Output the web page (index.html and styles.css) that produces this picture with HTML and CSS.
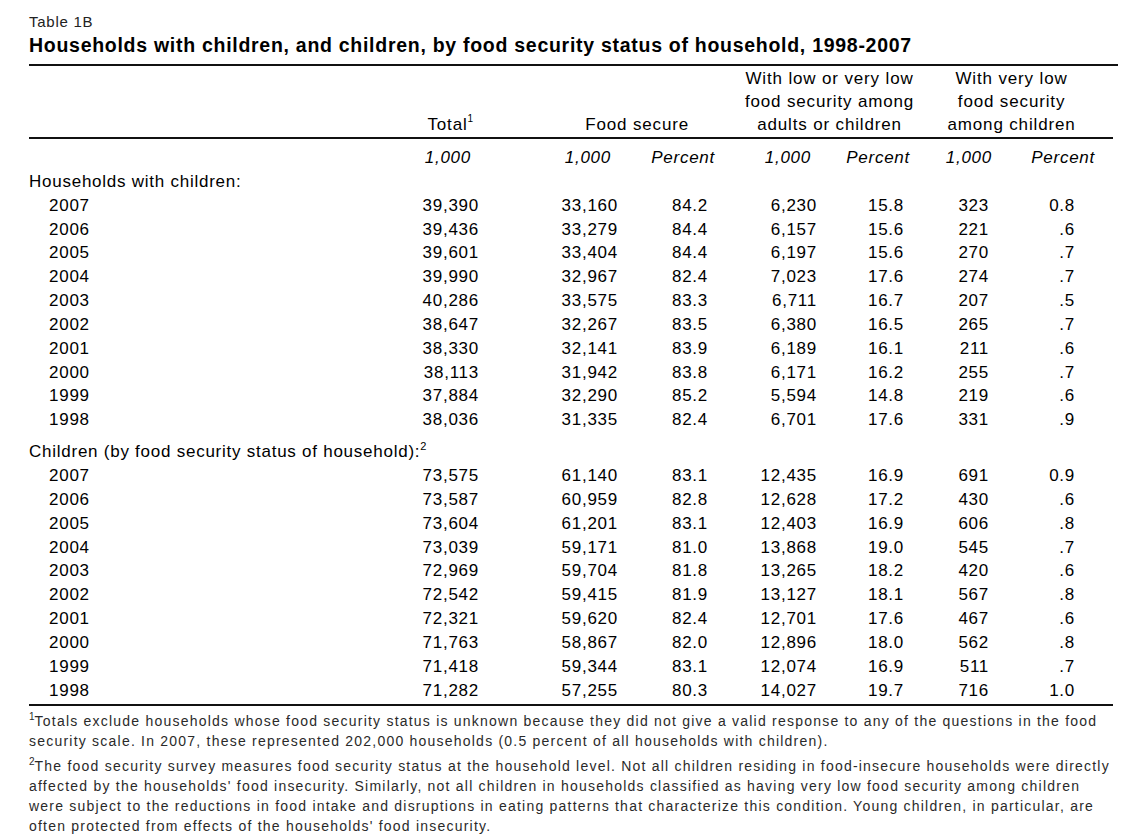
FILE: index.html
```html
<!DOCTYPE html>
<html>
<head>
<meta charset="utf-8">
<title>Table 1B</title>
<link rel="stylesheet" href="styles.css">
</head>
<body>
<div class="page">
  <div class="table-no">Table 1B</div>
  <h1 class="title">Households with children, and children, by food security status of household, 1998-2007</h1>
  <div class="top-rule"></div>
  <table class="data">
    <colgroup>
      <col class="w0"><col class="w1"><col class="w2"><col class="w3"><col class="w4"><col class="w5"><col class="w6"><col class="w7">
    </colgroup>
    <thead>
      <tr class="head">
        <th class="h-label"></th>
        <th class="h-total">Total<sup>1</sup></th>
        <th class="h-fs" colspan="2">Food secure</th>
        <th class="h-lvl" colspan="2">With low or very low<br>food security among<br>adults or children</th>
        <th class="h-vl" colspan="2">With very low<br>food security<br>among children</th>
      </tr>
    </thead>
    <tbody>
      <tr class="units">
        <td></td>
        <td class="u1">1,000</td><td class="u2">1,000</td><td class="u3">Percent</td>
        <td class="u4">1,000</td><td class="u5">Percent</td><td class="u6">1,000</td><td class="u7">Percent</td>
      </tr>
      <tr class="section"><td colspan="8">Households with children:</td></tr>
      <tr><td class="yr">2007</td><td class="c1">39,390</td><td class="c2">33,160</td><td class="c3">84.2</td><td class="c4">6,230</td><td class="c5">15.8</td><td class="c6">323</td><td class="c7">0.8</td></tr>
      <tr><td class="yr">2006</td><td class="c1">39,436</td><td class="c2">33,279</td><td class="c3">84.4</td><td class="c4">6,157</td><td class="c5">15.6</td><td class="c6">221</td><td class="c7">.6</td></tr>
      <tr><td class="yr">2005</td><td class="c1">39,601</td><td class="c2">33,404</td><td class="c3">84.4</td><td class="c4">6,197</td><td class="c5">15.6</td><td class="c6">270</td><td class="c7">.7</td></tr>
      <tr><td class="yr">2004</td><td class="c1">39,990</td><td class="c2">32,967</td><td class="c3">82.4</td><td class="c4">7,023</td><td class="c5">17.6</td><td class="c6">274</td><td class="c7">.7</td></tr>
      <tr><td class="yr">2003</td><td class="c1">40,286</td><td class="c2">33,575</td><td class="c3">83.3</td><td class="c4">6,711</td><td class="c5">16.7</td><td class="c6">207</td><td class="c7">.5</td></tr>
      <tr><td class="yr">2002</td><td class="c1">38,647</td><td class="c2">32,267</td><td class="c3">83.5</td><td class="c4">6,380</td><td class="c5">16.5</td><td class="c6">265</td><td class="c7">.7</td></tr>
      <tr><td class="yr">2001</td><td class="c1">38,330</td><td class="c2">32,141</td><td class="c3">83.9</td><td class="c4">6,189</td><td class="c5">16.1</td><td class="c6">211</td><td class="c7">.6</td></tr>
      <tr><td class="yr">2000</td><td class="c1">38,113</td><td class="c2">31,942</td><td class="c3">83.8</td><td class="c4">6,171</td><td class="c5">16.2</td><td class="c6">255</td><td class="c7">.7</td></tr>
      <tr><td class="yr">1999</td><td class="c1">37,884</td><td class="c2">32,290</td><td class="c3">85.2</td><td class="c4">5,594</td><td class="c5">14.8</td><td class="c6">219</td><td class="c7">.6</td></tr>
      <tr><td class="yr">1998</td><td class="c1">38,036</td><td class="c2">31,335</td><td class="c3">82.4</td><td class="c4">6,701</td><td class="c5">17.6</td><td class="c6">331</td><td class="c7">.9</td></tr>
      <tr class="section gap"><td colspan="8">Children (by food security status of household):<sup>2</sup></td></tr>
      <tr><td class="yr">2007</td><td class="c1">73,575</td><td class="c2">61,140</td><td class="c3">83.1</td><td class="c4">12,435</td><td class="c5">16.9</td><td class="c6">691</td><td class="c7">0.9</td></tr>
      <tr><td class="yr">2006</td><td class="c1">73,587</td><td class="c2">60,959</td><td class="c3">82.8</td><td class="c4">12,628</td><td class="c5">17.2</td><td class="c6">430</td><td class="c7">.6</td></tr>
      <tr><td class="yr">2005</td><td class="c1">73,604</td><td class="c2">61,201</td><td class="c3">83.1</td><td class="c4">12,403</td><td class="c5">16.9</td><td class="c6">606</td><td class="c7">.8</td></tr>
      <tr><td class="yr">2004</td><td class="c1">73,039</td><td class="c2">59,171</td><td class="c3">81.0</td><td class="c4">13,868</td><td class="c5">19.0</td><td class="c6">545</td><td class="c7">.7</td></tr>
      <tr><td class="yr">2003</td><td class="c1">72,969</td><td class="c2">59,704</td><td class="c3">81.8</td><td class="c4">13,265</td><td class="c5">18.2</td><td class="c6">420</td><td class="c7">.6</td></tr>
      <tr><td class="yr">2002</td><td class="c1">72,542</td><td class="c2">59,415</td><td class="c3">81.9</td><td class="c4">13,127</td><td class="c5">18.1</td><td class="c6">567</td><td class="c7">.8</td></tr>
      <tr><td class="yr">2001</td><td class="c1">72,321</td><td class="c2">59,620</td><td class="c3">82.4</td><td class="c4">12,701</td><td class="c5">17.6</td><td class="c6">467</td><td class="c7">.6</td></tr>
      <tr><td class="yr">2000</td><td class="c1">71,763</td><td class="c2">58,867</td><td class="c3">82.0</td><td class="c4">12,896</td><td class="c5">18.0</td><td class="c6">562</td><td class="c7">.8</td></tr>
      <tr><td class="yr">1999</td><td class="c1">71,418</td><td class="c2">59,344</td><td class="c3">83.1</td><td class="c4">12,074</td><td class="c5">16.9</td><td class="c6">511</td><td class="c7">.7</td></tr>
      <tr class="last"><td class="yr">1998</td><td class="c1">71,282</td><td class="c2">57,255</td><td class="c3">80.3</td><td class="c4">14,027</td><td class="c5">19.7</td><td class="c6">716</td><td class="c7">1.0</td></tr>
    </tbody>
  </table>
  <div class="notes">
    <p class="note"><sup>1</sup>Totals exclude households whose food security status is unknown because they did not give a valid response to any of the questions in the food<br>security scale. In 2007, these represented 202,000 households (0.5 percent of all households with children).</p>
    <p class="note"><sup>2</sup>The food security survey measures food security status at the household level. Not all children residing in food-insecure households were directly<br>affected by the households' food insecurity. Similarly, not all children in households classified as having very low food security among children<br>were subject to the reductions in food intake and disruptions in eating patterns that characterize this condition. Young children, in particular, are<br>often protected from effects of the households' food insecurity.</p>
  </div>
</div>
</body>
</html>
```

FILE: styles.css
```css
html, body {
  margin: 0;
  padding: 0;
  background: #ffffff;
}

.page {
  padding: 14px 0 0 29px;
  font-family: "Liberation Sans", Arial, sans-serif;
  color: #000;
}

.table-no {
  font-size: 15px;
  line-height: 16px;
  letter-spacing: 0.75px;
  color: #222;
}

.title {
  margin: 3px 0 0 0;
  font-size: 19.5px;
  font-weight: bold;
  line-height: 24px;
  letter-spacing: 0.72px;
  padding-bottom: 7px;
}

.top-rule {
  width: 1089px;
  height: 2px;
  background: #111;
}

.data {
  width: 1084px;
  table-layout: fixed;
  border-collapse: collapse;
  font-size: 17px;
  letter-spacing: 0.75px;
}

.w0 { width: 371px; }
.w1 { width: 90px; }
.w2 { width: 140px; }
.w3 { width: 95px; }
.w4 { width: 105px; }
.w5 { width: 95px; }
.w6 { width: 75px; }
.w7 { width: 113px; }

.data th,
.data td {
  padding: 0;
  white-space: nowrap;
}

.head th {
  font-weight: normal;
  vertical-align: bottom;
  line-height: 23px;
  letter-spacing: 0.85px;
  padding-top: 1px;
  padding-bottom: 1px;
  border-bottom: 2px solid #111;
}

.head sup {
  font-size: 10px;
  vertical-align: 8px;
  line-height: 0;
}

.h-total { text-align: right; padding-right: 16px !important; }
.h-fs { text-align: right; padding-right: 36px !important; }
.h-lvl { text-align: center; padding-left: 9px !important; }
.h-vl { text-align: center; padding-right: 15px !important; }

.units td {
  font-style: italic;
  text-align: right;
  line-height: 23.85px;
  padding-top: 7px;
}

.u1 { padding-right: 19px !important; }
.u2 { padding-right: 19px !important; }
.u3 { padding-right: 10px !important; }
.u4 { padding-right: 19px !important; }
.u5 { padding-right: 15px !important; }
.u6 { padding-right: 8px !important; }
.u7 { padding-right: 18px !important; }

.data tbody td {
  line-height: 23.85px;
}

.section td {
  text-align: left;
}

.section sup {
  font-size: 11px;
  vertical-align: 7px;
  line-height: 0;
}

.section.gap td {
  padding-top: 8px;
}

.yr { padding-left: 20px !important; }

.c1, .c2, .c3, .c4, .c5, .c6, .c7 { text-align: right; }
.c1 { padding-right: 11px !important; }
.c2 { padding-right: 12px !important; }
.c3 { padding-right: 17px !important; }
.c4 { padding-right: 13px !important; }
.c5 { padding-right: 21px !important; }
.c6 { padding-right: 11px !important; }
.c7 { padding-right: 38px !important; }

.last td {
  padding-bottom: 2px;
  border-bottom: 2px solid #111;
}

.notes {
  padding-top: 5px;
  color: #2a2a2a;
  font-size: 14px;
  letter-spacing: 1.22px;
}

.note {
  margin: 0 0 5px 0;
  line-height: 20px;
  white-space: nowrap;
}

.note sup {
  font-size: 10px;
  vertical-align: 6px;
  line-height: 0;
  letter-spacing: 0;
}
```
